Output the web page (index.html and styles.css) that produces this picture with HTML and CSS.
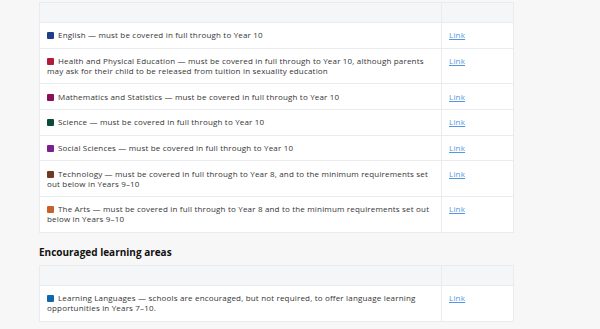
FILE: index.html
```
<!DOCTYPE html>
<html lang="en">
<head>
<meta charset="utf-8">
<title>Learning areas</title>
<link rel="stylesheet" href="styles.css">
</head>
<body>
<main class="page">
  <table class="areas">
    <thead>
      <tr><th class="c-text"></th><th class="c-link"></th></tr>
    </thead>
    <tbody>
      <tr><td class="c-text"><span class="sq sq-eng"></span>English — must be covered in full through to Year 10</td><td class="c-link"><a href="#">Link</a></td></tr>
      <tr><td class="c-text"><span class="sq sq-hpe"></span>Health and Physical Education — must be covered in full through to Year 10, although parents may ask for their child to be released from tuition in sexuality education</td><td class="c-link"><a href="#">Link</a></td></tr>
      <tr><td class="c-text"><span class="sq sq-math"></span>Mathematics and Statistics — must be covered in full through to Year 10</td><td class="c-link"><a href="#">Link</a></td></tr>
      <tr><td class="c-text"><span class="sq sq-sci"></span>Science — must be covered in full through to Year 10</td><td class="c-link"><a href="#">Link</a></td></tr>
      <tr><td class="c-text"><span class="sq sq-soc"></span>Social Sciences — must be covered in full through to Year 10</td><td class="c-link"><a href="#">Link</a></td></tr>
      <tr><td class="c-text"><span class="sq sq-tech"></span>Technology — must be covered in full through to Year 8, and to the minimum requirements set out&nbsp;below in Years 9–10</td><td class="c-link"><a href="#">Link</a></td></tr>
      <tr><td class="c-text"><span class="sq sq-arts"></span>The Arts — must be covered in full through to Year 8 and to the minimum requirements set out below in Years 9–10</td><td class="c-link"><a href="#">Link</a></td></tr>
    </tbody>
  </table>
  <h2 class="heading">Encouraged learning areas</h2>
  <table class="areas">
    <thead>
      <tr><th class="c-text"></th><th class="c-link"></th></tr>
    </thead>
    <tbody>
      <tr><td class="c-text"><span class="sq sq-lang"></span>Learning Languages — schools are encouraged, but not required, to offer language learning opportunities in Years 7–10.</td><td class="c-link"><a href="#">Link</a></td></tr>
    </tbody>
  </table>
</main>
</body>
</html>
```
FILE: styles.css
```
html, body {
  margin: 0;
  padding: 0;
  background: #f7f7f8;
}
body {
  font-family: "Open Sans", "DejaVu Sans", sans-serif;
  color: #353535;
  font-size: 8px;
}
.page {
  padding: 2px 0 0 39px;
  width: 475px;
}
.areas {
  width: 475px;
  border-collapse: collapse;
  background: #ffffff;
  table-layout: fixed;
}
.areas th, .areas td {
  border: 1px solid #e9ebee;
  text-align: left;
  vertical-align: top;
}
.areas thead th {
  background: #f5f6f8;
  height: 19px;
  padding: 0;
}
.areas .c-link {
  width: 71px;
}
.areas td {
  padding: 7.35px 7px;
  line-height: 10px;
  letter-spacing: 0.18px;
}
.areas td.c-text {
  padding-right: 6px;
}
.areas a {
  color: #5596e0;
  text-decoration: underline;
  letter-spacing: 0.2px;
}
.sq {
  display: inline-block;
  width: 7px;
  height: 7px;
  border-radius: 1px;
  margin-right: 4px;
  vertical-align: -1px;
}
.sq-eng { background: #1e3e8c; }
.sq-hpe { background: #b01c3a; }
.sq-math { background: #8b0e5a; }
.sq-sci { background: #0c4a3c; }
.sq-soc { background: #7a2090; }
.sq-tech { background: #6e3a22; }
.sq-arts { background: #c8602c; }
.sq-lang { background: #0f68ad; }
.heading {
  margin: 0;
  padding: 13px 0 7px 0;
  font-size: 10px;
  line-height: 12px;
  font-weight: 700;
  color: #111111;
}
```
